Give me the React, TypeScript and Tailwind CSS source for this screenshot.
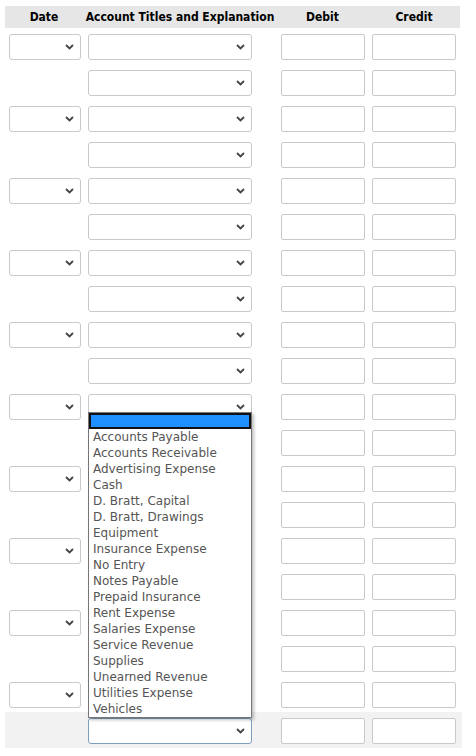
const accounts = [
  "Accounts Payable",
  "Accounts Receivable",
  "Advertising Expense",
  "Cash",
  "D. Bratt, Capital",
  "D. Bratt, Drawings",
  "Equipment",
  "Insurance Expense",
  "No Entry",
  "Notes Payable",
  "Prepaid Insurance",
  "Rent Expense",
  "Salaries Expense",
  "Service Revenue",
  "Supplies",
  "Unearned Revenue",
  "Utilities Expense",
  "Vehicles",
]

function Chevron() {
  return (
    <svg width="9" height="6" viewBox="0 0 9 6" className="absolute right-[6px] top-1/2 -translate-y-1/2">
      <path d="M1 1 L4.5 4.5 L8 1" fill="none" stroke="#444" strokeWidth="1.8" />
    </svg>
  )
}

function FakeSelect({ width, focused }: { width: string; focused?: boolean }) {
  return (
    <div
      className={`relative h-[26px] ${width} rounded-[3px] border bg-white ${
        focused ? "border-[#7f9fbf]" : "border-[#c9c9c9]"
      }`}
    >
      <Chevron />
    </div>
  )
}

function AmountInput() {
  return (
    <input
      type="text"
      className="h-[26px] w-[84px] rounded-[2px] border border-[#c9c9c9] bg-white outline-none"
    />
  )
}

function Dropdown() {
  return (
    <div className="absolute left-[5px] top-[18px] z-10 w-[164px] border border-[#767676] bg-white shadow-[2px_2px_3px_rgba(0,0,0,0.25)]">
      <div className="h-[16px] border-2 border-[#111] bg-[#1e90ff]" />
      {accounts.map((a) => (
        <div key={a} className="h-[16px] pl-[4px] text-[12px] leading-[16px] text-[#555]">
          {a}
        </div>
      ))}
    </div>
  )
}

function Row({ i }: { i: number }) {
  const last = i === 19
  return (
    <div className={`grid h-[36px] grid-cols-[78px_194px_91px_92px] pt-[6px] ${last ? "bg-[#f2f2f2] w-[457px]" : ""}`}>
      <div className="pl-[4px]">{i % 2 === 0 && <FakeSelect width="w-[72px]" />}</div>
      <div className="relative pl-[5px]">
        <FakeSelect width="w-[164px]" focused={last} />
        {i === 10 && <Dropdown />}
      </div>
      <div className="pl-[4px]">
        <AmountInput />
      </div>
      <div className="pl-[4px]">
        <AmountInput />
      </div>
    </div>
  )
}

export default function App() {
  return (
    <div
      className="min-h-[756px] bg-white pl-[5px] pt-[6px]"
      style={{ fontFamily: '"DejaVu Sans", Verdana, sans-serif' }}
    >
      <div
        className="grid h-[22px] w-[455px] grid-cols-[78px_194px_91px_92px] whitespace-nowrap bg-[#e6e6e6] text-[12px] font-bold leading-[22px] text-black"
        style={{ fontFamily: '"DejaVu Sans Condensed", "DejaVu Sans", sans-serif' }}
      >
        <div className="text-center">Date</div>
        <div className="text-center">Account Titles and Explanation</div>
        <div className="text-center">Debit</div>
        <div className="text-center">Credit</div>
      </div>
      {Array.from({ length: 20 }, (_, i) => (
        <Row key={i} i={i} />
      ))}
    </div>
  )
}
